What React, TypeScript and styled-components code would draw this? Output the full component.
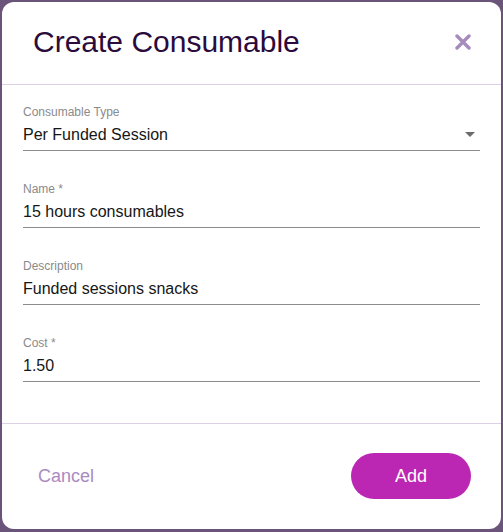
import React, { ReactElement } from 'react';
import styled, { createGlobalStyle } from 'styled-components';

const GlobalStyle = createGlobalStyle`
  html, body {
    margin: 0;
    padding: 0;
    background: #6b5479;
    font-family: 'Liberation Sans', Arial, sans-serif;
  }
`;

const Backdrop = styled.div`
  width: 503px;
  height: 532px;
  padding: 2px 2px 3px 2px;
  box-sizing: border-box;
  display: flex;
`;

const Dialog = styled.div`
  flex: 1;
  background: #ffffff;
  border-radius: 12px;
  display: flex;
  flex-direction: column;
  overflow: hidden;
`;

const Header = styled.div`
  display: flex;
  align-items: center;
  justify-content: space-between;
  padding: 22px 29px 24px 31px;
  border-bottom: 1px solid #ddd0e5;
`;

const Title = styled.h1`
  margin: 0;
  font-size: 30px;
  line-height: 36px;
  font-weight: 400;
  color: #2b0b3b;
`;

const CloseButton = styled.button`
  border: none;
  background: none;
  padding: 0;
  width: 18px;
  height: 18px;
  display: flex;
  align-items: center;
  justify-content: center;
  cursor: pointer;
`;

const Body = styled.div`
  padding: 20px 21px 41px 21px;
  display: flex;
  flex-direction: column;
  gap: 31px;
`;

const Field = styled.label`
  display: flex;
  flex-direction: column;
  gap: 6px;
`;

const Label = styled.span`
  font-size: 12px;
  line-height: 14px;
  color: #8a8a8a;
`;

const InputRow = styled.div`
  display: flex;
  align-items: center;
  justify-content: space-between;
  padding-bottom: 6px;
  border-bottom: 1px solid #8c8c8c;
`;

const Value = styled.span`
  font-size: 16px;
  line-height: 19px;
  color: #161616;
`;

const Caret = styled.span`
  width: 0;
  height: 0;
  margin-right: 5px;
  border-left: 5px solid transparent;
  border-right: 5px solid transparent;
  border-top: 5px solid #6b6b6b;
`;

const Footer = styled.div`
  border-top: 1px solid #ddd0e5;
  display: flex;
  align-items: center;
  justify-content: space-between;
  padding: 29px 30px 30px 21px;
`;

const TextButton = styled.button`
  border: none;
  background: none;
  padding: 0 15px;
  height: 46px;
  font-family: inherit;
  font-size: 18px;
  color: #a98bc0;
  cursor: pointer;
`;

const PrimaryButton = styled.button`
  border: none;
  background: #bb27b3;
  color: #ffffff;
  width: 120px;
  height: 46px;
  border-radius: 23px;
  font-family: inherit;
  font-size: 18px;
  cursor: pointer;
`;

interface FieldData {
  label: string;
  value: string;
  select?: boolean;
}

const fields: FieldData[] = [
  { label: 'Consumable Type', value: 'Per Funded Session', select: true },
  { label: 'Name *', value: '15 hours consumables' },
  { label: 'Description', value: 'Funded sessions snacks' },
  { label: 'Cost *', value: '1.50' },
];

const CloseIcon = (): ReactElement => (
  <svg width="16" height="16" viewBox="0 0 16 16">
    <path d="M2 2 L14 14 M14 2 L2 14" stroke="#a68cbd" strokeWidth="3.4" strokeLinecap="round" />
  </svg>
);

export default function App(): ReactElement {
  return (
    <>
      <GlobalStyle />
      <Backdrop>
        <Dialog>
          <Header>
            <Title>Create Consumable</Title>
            <CloseButton aria-label="Close">
              <CloseIcon />
            </CloseButton>
          </Header>
          <Body>
            {fields.map((f) => (
              <Field key={f.label}>
                <Label>{f.label}</Label>
                <InputRow>
                  <Value>{f.value}</Value>
                  {f.select && <Caret />}
                </InputRow>
              </Field>
            ))}
          </Body>
          <Footer>
            <TextButton>Cancel</TextButton>
            <PrimaryButton>Add</PrimaryButton>
          </Footer>
        </Dialog>
      </Backdrop>
    </>
  );
}
